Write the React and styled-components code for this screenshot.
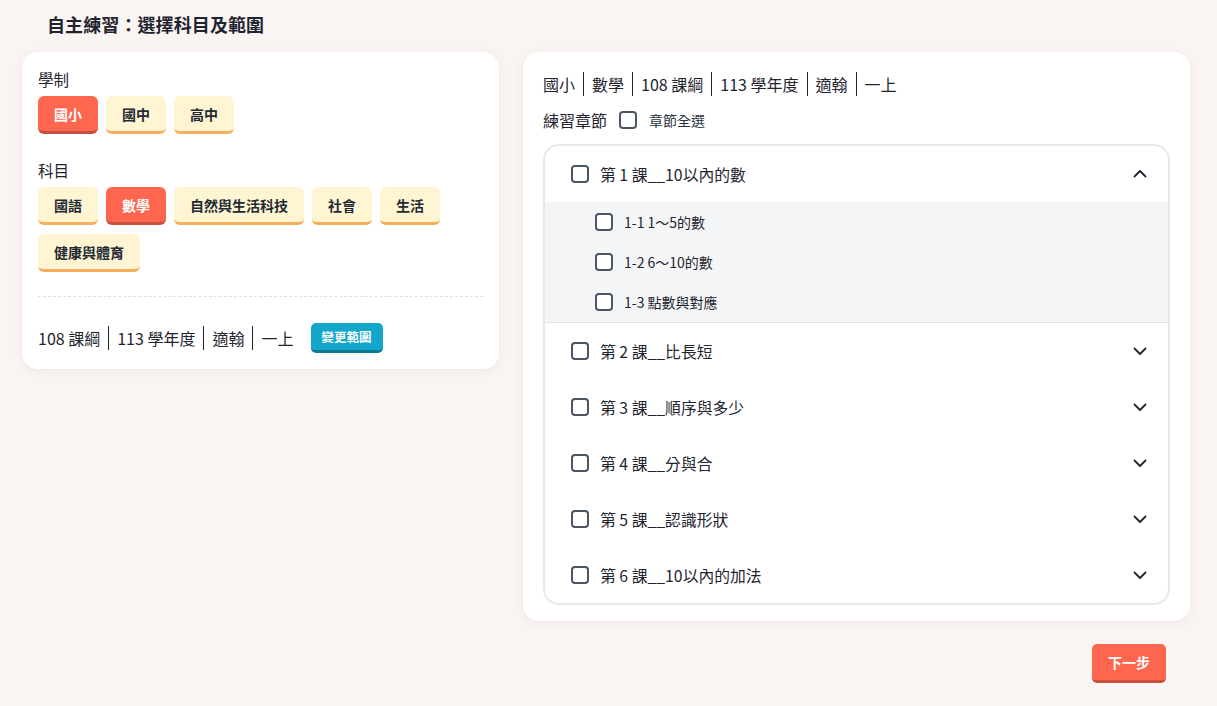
import React, { useState } from 'react'
import styled, { createGlobalStyle } from 'styled-components'

const GlobalStyle = createGlobalStyle`
  html, body {
    margin: 0;
    padding: 0;
    background: #faf4f3;
    font-family: 'Noto Sans CJK TC', 'Noto Sans', sans-serif;
    color: #1f2530;
  }
`

const Page = styled.div`
  width: 1217px;
  height: 706px;
  padding: 10px 27px 0 22px;
  box-sizing: border-box;
`

const Title = styled.h1`
  margin: 0 0 0 25px;
  height: 28px;
  font-size: 18px;
  font-weight: 700;
  line-height: 28px;
  letter-spacing: 0.1px;
`

const Columns = styled.div`
  display: flex;
  align-items: flex-start;
  gap: 24px;
  margin-top: 14px;
`

const Card = styled.div`
  background: #fff;
  border-radius: 16px;
  box-shadow: 0 2px 10px rgba(120, 90, 90, 0.08);
  box-sizing: border-box;
`

const LeftCard = styled(Card)`
  width: 477px;
  padding: 16px 16px 16px;
`

const RightCard = styled(Card)`
  width: 667px;
  padding: 20px 20px 16px;
`

const Label = styled.div`
  font-size: 15.5px;
  line-height: 22px;
  margin-bottom: 6px;
`

const ChipRow = styled.div`
  display: flex;
  flex-wrap: wrap;
  gap: 9px 8px;
  margin-bottom: ${p => p.$mb || 0}px;
`

const Chip = styled.button`
  border: none;
  border-bottom: 3px solid ${p => (p.$active ? '#c9503f' : '#f5ae5c')};
  background: ${p => (p.$active ? '#ff6650' : '#fff5d3')};
  color: ${p => (p.$active ? '#fff' : '#222a33')};
  font-family: inherit;
  font-size: 14px;
  font-weight: 700;
  height: 38px;
  padding: 0 16px;
  min-width: 60px;
  border-radius: 6px;
  box-sizing: border-box;
`

const Dashed = styled.div`
  border-top: 1px dashed #e1e1e4;
  margin: 24px 0 26px;
`

const InfoRow = styled.div`
  display: flex;
  align-items: center;
  font-size: 16px;
`

const InfoItem = styled.span`
  padding: 0 8px;
  line-height: 24px;
  border-left: ${p => (p.$first ? 'none' : '1.5px solid #1f2530')};
  &:first-child {
    padding-left: 0;
  }
`

const SmallBtn = styled.button`
  margin-left: 9px;
  border: none;
  border-bottom: 3px solid #0d7a93;
  background: #12a6cb;
  color: #fff;
  font-family: inherit;
  font-size: 12.5px;
  font-weight: 700;
  height: 30px;
  padding: 0 11px;
  border-radius: 5px;
  box-sizing: border-box;
`

const SelectRow = styled.div`
  display: flex;
  align-items: center;
  gap: 12px;
  margin-top: 13px;
  font-size: 16px;
  line-height: 22px;
`

const SelectHint = styled.span`
  font-size: 14px;
  color: #2a323c;
`

const Box = styled.span`
  display: inline-block;
  width: 18px;
  height: 18px;
  border: 2px solid #4b5563;
  border-radius: 4px;
  box-sizing: border-box;
  flex-shrink: 0;
  background: #fff;
`

const Accordion = styled.div`
  margin-top: 13px;
  border: 2px solid #e8e8ed;
  border-radius: 16px;
  overflow: hidden;
`

const ChapterHead = styled.div`
  display: flex;
  align-items: center;
  height: 56px;
  padding: 0 20px 0 26px;
  gap: 11px;
  font-size: 15.8px;
`

const ChapterName = styled.span`
  flex: 1;
`

const SubList = styled.div`
  background: #f4f5f7;
  padding: 0 0 0 50px;
  border-bottom: 1px solid #e3e4e8;
`

const SubItem = styled.div`
  display: flex;
  align-items: center;
  gap: 11px;
  height: 40px;
  font-size: 14px;
`

const Chevron = ({ up }) => (
  <svg width="16" height="16" viewBox="0 0 16 16" fill="none">
    <path
      d={up ? 'M2.5 10.5L8 5l5.5 5.5' : 'M2.5 5.5L8 11l5.5-5.5'}
      stroke="#1f2530"
      strokeWidth="1.8"
      strokeLinecap="round"
      strokeLinejoin="round"
    />
  </svg>
)

const Footer = styled.div`
  display: flex;
  justify-content: flex-end;
  margin-top: 23px;
  padding-right: 24px;
`

const NextBtn = styled.button`
  border: none;
  border-bottom: 3px solid #c9503f;
  background: #ff6650;
  color: #fff;
  font-family: inherit;
  font-size: 14px;
  font-weight: 700;
  height: 39px;
  width: 74px;
  border-radius: 5px;
  box-sizing: border-box;
`

const levels = ['國小', '國中', '高中']
const subjects = ['國語', '數學', '自然與生活科技', '社會', '生活', '健康與體育']
const chapters = [
  { name: '第 1 課__10以內的數', subs: ['1-1 1～5的數', '1-2 6～10的數', '1-3 點數與對應'] },
  { name: '第 2 課__比長短' },
  { name: '第 3 課__順序與多少' },
  { name: '第 4 課__分與合' },
  { name: '第 5 課__認識形狀' },
  { name: '第 6 課__10以內的加法' },
]

export default function App() {
  const [level] = useState('國小')
  const [subject] = useState('數學')

  return (
    <Page>
      <GlobalStyle />
      <Title>自主練習：選擇科目及範圍</Title>
      <Columns>
        <LeftCard>
          <Label>學制</Label>
          <ChipRow $mb={25}>
            {levels.map(l => (
              <Chip key={l} $active={l === level}>{l}</Chip>
            ))}
          </ChipRow>
          <Label>科目</Label>
          <ChipRow>
            {subjects.map(s => (
              <Chip key={s} $active={s === subject}>{s}</Chip>
            ))}
          </ChipRow>
          <Dashed />
          <InfoRow>
            {['108 課綱', '113 學年度', '適翰', '一上'].map((t, i) => (
              <InfoItem key={t} $first={i === 0}>{t}</InfoItem>
            ))}
            <SmallBtn>變更範圍</SmallBtn>
          </InfoRow>
        </LeftCard>

        <div>
          <RightCard>
            <InfoRow>
              {['國小', '數學', '108 課綱', '113 學年度', '適翰', '一上'].map((t, i) => (
                <InfoItem key={t} $first={i === 0}>{t}</InfoItem>
              ))}
            </InfoRow>
            <SelectRow>
              練習章節
              <Box />
              <SelectHint>章節全選</SelectHint>
            </SelectRow>
            <Accordion>
              {chapters.map(c => (
                <div key={c.name}>
                  <ChapterHead>
                    <Box />
                    <ChapterName>{c.name}</ChapterName>
                    <Chevron up={!!c.subs} />
                  </ChapterHead>
                  {c.subs && (
                    <SubList>
                      {c.subs.map(s => (
                        <SubItem key={s}>
                          <Box />
                          {s}
                        </SubItem>
                      ))}
                    </SubList>
                  )}
                </div>
              ))}
            </Accordion>
          </RightCard>
          <Footer>
            <NextBtn>下一步</NextBtn>
          </Footer>
        </div>
      </Columns>
    </Page>
  )
}
